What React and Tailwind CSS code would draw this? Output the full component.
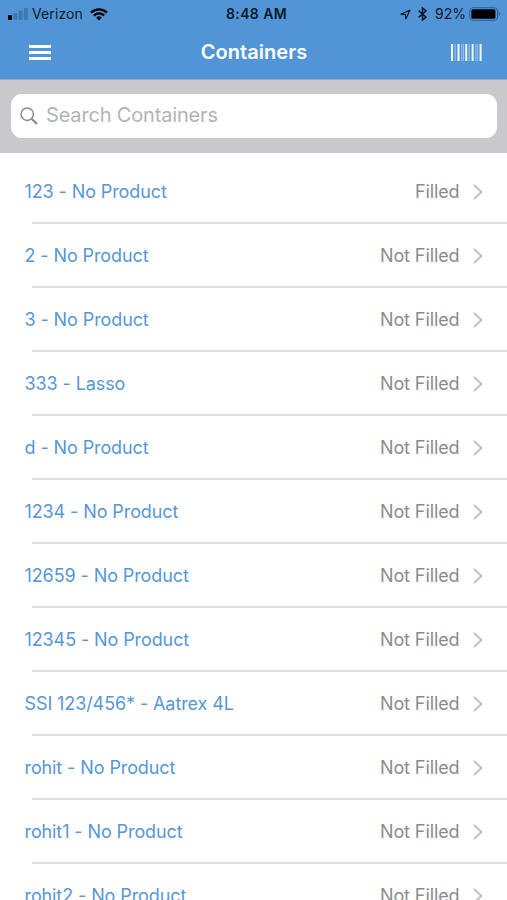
const containers = [
  { name: "123 - No Product", status: "Filled" },
  { name: "2 - No Product", status: "Not Filled" },
  { name: "3 - No Product", status: "Not Filled" },
  { name: "333 - Lasso", status: "Not Filled" },
  { name: "d - No Product", status: "Not Filled" },
  { name: "1234 - No Product", status: "Not Filled" },
  { name: "12659 - No Product", status: "Not Filled" },
  { name: "12345 - No Product", status: "Not Filled" },
  { name: "SSI 123/456* - Aatrex 4L", status: "Not Filled" },
  { name: "rohit - No Product", status: "Not Filled" },
  { name: "rohit1 - No Product", status: "Not Filled" },
  { name: "rohit2 - No Product", status: "Not Filled" },
];

function StatusBar() {
  return (
    <div className="grid h-7 grid-cols-[1fr_auto_1fr] items-center pl-2 pr-1.5 text-[#0b1a2a]">
      <div className="flex items-center">
        <svg width="20" height="12" viewBox="0 0 20 12">
          <rect x="0" y="7" width="4" height="5" rx="1" fill="#000" />
          <rect x="5.3" y="5" width="4" height="7" rx="1" fill="#3f79b1" />
          <rect x="10.6" y="2.5" width="4" height="9.5" rx="1" fill="#3f79b1" />
          <rect x="15.9" y="0" width="4" height="12" rx="1" fill="#3f79b1" />
        </svg>
        <span className="ml-1 w-[51px] whitespace-nowrap text-sm leading-7 tracking-[0.1px]">Verizon</span>
        <svg className="ml-[7px]" width="18" height="13" viewBox="0 0 18 13" fill="none" stroke="#000" strokeWidth="2.3">
          <path d="M1 4.6A11.3 11.3 0 0 1 17 4.6" />
          <path d="M3.8 7.6A7.4 7.4 0 0 1 14.2 7.6" />
          <path d="M6.2 9.7A4 4 0 0 1 11.8 9.7L9 12.6Z" fill="#000" stroke="none" />
        </svg>
      </div>
      <span className="pl-1 text-sm font-semibold leading-7 tracking-[0.4px]">8:48 AM</span>
      <div className="flex items-center justify-end">
        <svg width="11" height="11" viewBox="0 0 11 11" fill="none" stroke="#0b1a2a" strokeWidth="1.2" strokeLinejoin="round">
          <path d="M10 1L0.9 5.2L5.4 5.6L5.8 10Z" />
        </svg>
        <svg className="ml-[7px]" width="9" height="14" viewBox="0 0 9 14" fill="none" stroke="#0b1a2a" strokeWidth="1.6">
          <path d="M0.6 3.7L8 10.1L4.5 13V1L8 3.9L0.6 10.3" />
        </svg>
        <span className="ml-2 text-sm leading-7">92%</span>
        <svg className="ml-[3px]" width="32" height="14" viewBox="0 0 32 14">
          <rect x="0.9" y="0.7" width="27.6" height="12.6" rx="3.2" fill="none" stroke="#2f5f8f" strokeWidth="1" />
          <rect x="2.4" y="2.2" width="24" height="9.6" rx="1.6" fill="#000" />
          <path d="M29.8 4.8Q32.2 7 29.8 9.2Z" fill="#2f5f8f" />
        </svg>
      </div>
    </div>
  );
}

function NavBar() {
  return (
    <div className="grid h-[51px] grid-cols-[1fr_auto_1fr] items-center pb-[3px] pl-[28px] pr-[25px] text-white">
      <div className="flex flex-col gap-[3px] pl-px pt-px">
        <div className="h-[3px] w-[22px] bg-white" />
        <div className="h-[3px] w-[22px] bg-white" />
        <div className="h-[3px] w-[22px] bg-white" />
      </div>
      <h1 className="pr-0.5 text-xl font-semibold leading-6 tracking-[0.05px]">Containers</h1>
      <svg className="justify-self-end" width="31" height="17" viewBox="0 0 31 17" fill="#fff">
        <rect x="0" width="2" height="17" opacity=".9" />
        <rect x="3.6" width="1" height="17" opacity=".45" />
        <rect x="6.5" width="2" height="17" opacity=".9" />
        <rect x="10.3" width="1" height="17" opacity=".45" />
        <rect x="12" width="1" height="17" opacity=".4" />
        <rect x="14.2" width="2" height="17" opacity=".9" />
        <rect x="17.6" width="1" height="17" opacity=".45" />
        <rect x="20.6" width="2" height="17" opacity=".9" />
        <rect x="24.4" width="1" height="17" opacity=".45" />
        <rect x="26.2" width="1" height="17" opacity=".4" />
        <rect x="28.6" width="2" height="17" opacity=".9" />
      </svg>
    </div>
  );
}

function SearchBar() {
  return (
    <div className="h-[73px] bg-[#c9c8cd] pl-[11px] pr-2.5 pt-[14px]">
      <div className="flex h-11 items-center rounded-[11px] bg-white pl-[9px]">
        <svg width="18" height="18" viewBox="0 0 18 18" fill="none" stroke="#8a8a8e">
          <circle cx="7.2" cy="7.2" r="6.2" strokeWidth="1.5" />
          <path d="M11.7 11.7L17 17" strokeWidth="2.2" />
        </svg>
        <span className="ml-2 pb-0.5 text-xl leading-6 tracking-[-0.17px] text-[#b3b3b5]">Search Containers</span>
      </div>
    </div>
  );
}

function ContainerRow({ name, status }) {
  return (
    <li className="flex h-16 flex-col">
      <div className="flex h-[63px] items-center justify-between pl-[24.5px] pr-[24.5px] pt-px text-lg leading-6 tracking-[-0.1px]">
        <span className="whitespace-nowrap text-[#5797d5]">{name}</span>
        <div className="flex items-center text-[#8b8b8d]">
          <span>{status}</span>
          <svg className="ml-[13px]" width="10" height="16" viewBox="0 0 10 16" fill="none" stroke="#c4c4c7" strokeWidth="2.2">
            <path d="M1 1L8.3 8L1 15" />
          </svg>
        </div>
      </div>
      <div className="ml-8 h-0.5 shrink-0 bg-[#dfdfe1]" />
    </li>
  );
}

export default function App() {
  return (
    <main className="h-[900px] w-full overflow-hidden bg-white font-['Inter',sans-serif]">
      <header className="bg-[#5195d6]">
        <StatusBar />
        <NavBar />
      </header>
      <div className="h-px bg-[#96add0]" />
      <SearchBar />
      <ul className="pt-[7px]">
        {containers.map((item) => (
          <ContainerRow key={item.name} name={item.name} status={item.status} />
        ))}
      </ul>
    </main>
  );
}
